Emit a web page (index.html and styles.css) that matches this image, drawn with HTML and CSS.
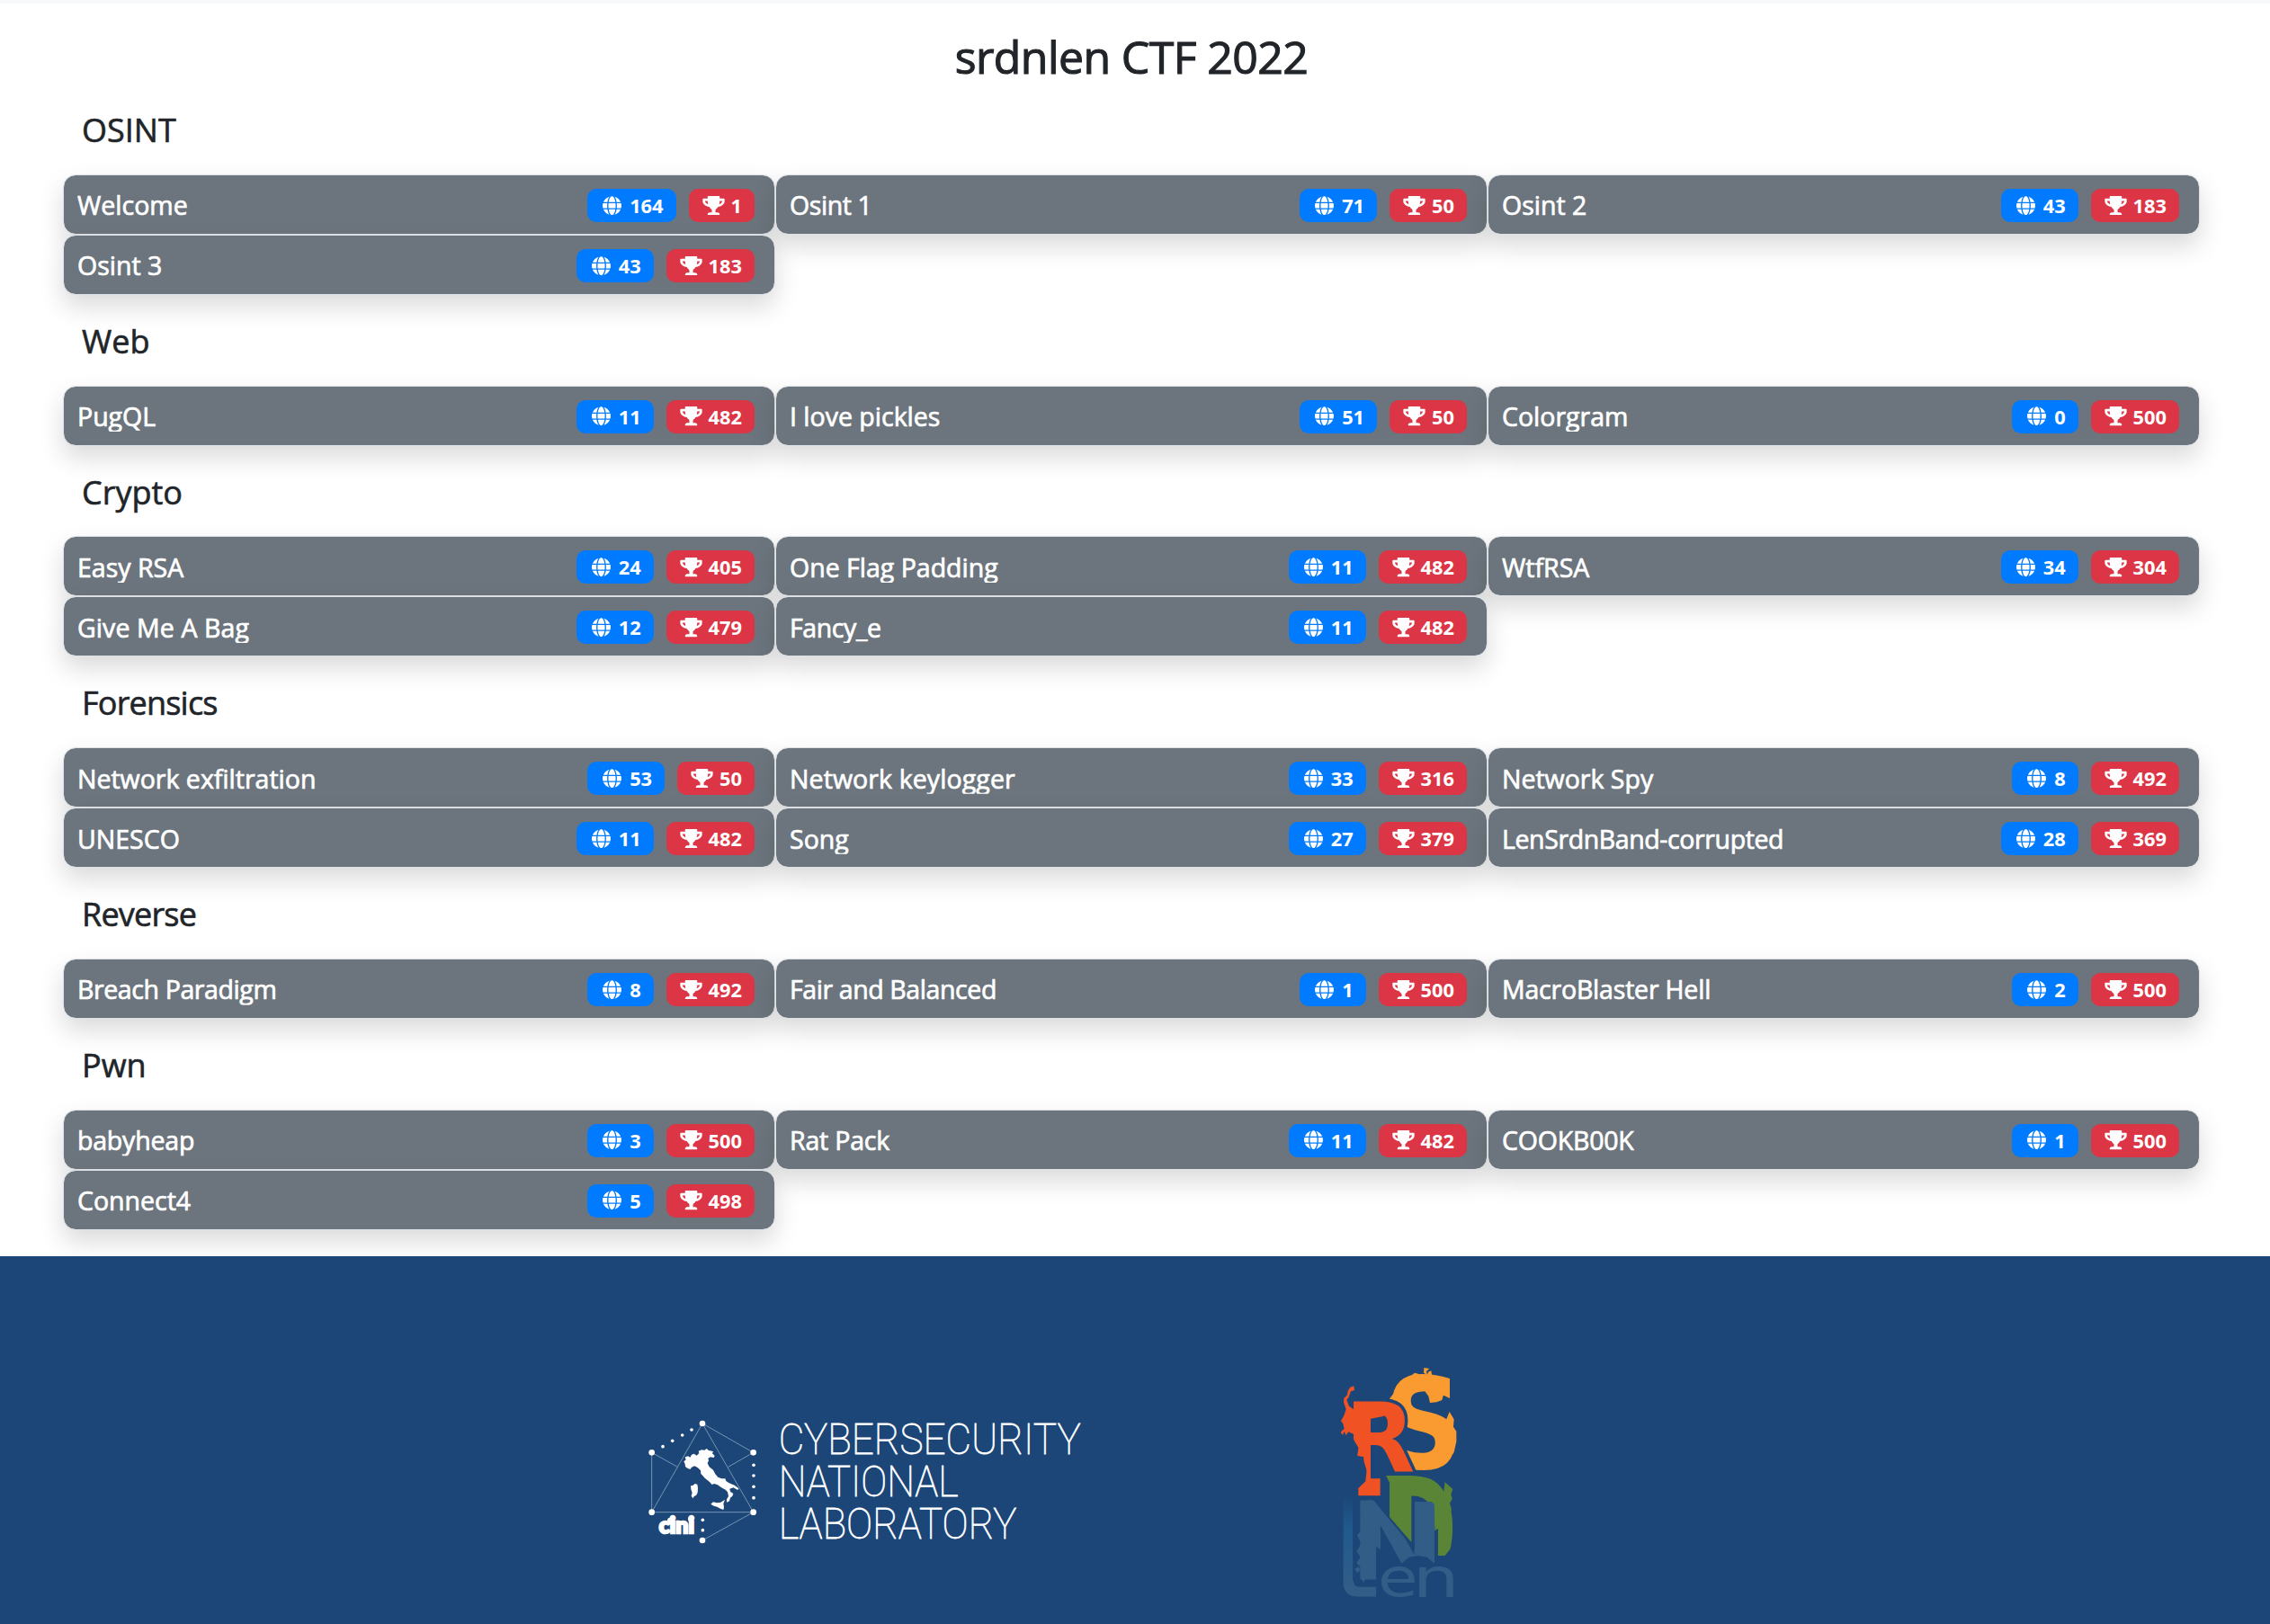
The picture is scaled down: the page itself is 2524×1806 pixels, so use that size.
FILE: index.html
```html
<!DOCTYPE html>
<html lang="en">
<head>
<meta charset="utf-8">
<title>srdnlen CTF 2022</title>
<link rel="stylesheet" href="styles.css">
</head>
<body>
<svg class="sprite" aria-hidden="true">
  <symbol id="globe" viewBox="-72 0 640 512"><path d="M336.5 160C322 70.7 287.8 8 248 8s-74 62.7-88.5 152h177zM152 256c0 22.2 1.2 43.5 3.3 64h185.3c2.1-20.5 3.3-41.8 3.3-64s-1.2-43.5-3.3-64H155.3c-2.1 20.5-3.3 41.8-3.3 64zm324.7-96c-28.6-67.9-86.5-120.4-158-141.6 24.4 33.8 41.2 84.7 50 141.6h108zM177.2 18.4C105.8 39.6 47.8 92.1 19.3 160h108c8.7-56.9 25.5-107.8 49.9-141.6zM487.4 192H372.7c2.1 21 3.3 42.5 3.3 64s-1.2 43-3.3 64h114.6c5.5-20.5 8.6-41.8 8.6-64s-3.1-43.5-8.5-64zM120 256c0-21.5 1.2-43 3.3-64H8.6C3.2 212.5 0 233.8 0 256s3.2 43.5 8.6 64h114.6c-2-21-3.2-42.5-3.2-64zm39.5 96c14.5 89.3 48.7 152 88.5 152s74-62.7 88.5-152h-177zm159.3 141.6c71.4-21.2 129.4-73.7 158-141.6h-108c-8.8 56.9-25.6 107.8-50 141.6zM19.3 352c28.6 67.9 86.5 120.4 158 141.6-24.4-33.8-41.2-84.7-50-141.6h-108z"/></symbol>
  <symbol id="trophy" viewBox="-32 0 640 512"><path d="M552 64H448V24c0-13.3-10.7-24-24-24H152c-13.3 0-24 10.7-24 24v40H24C10.7 64 0 74.7 0 88v56c0 35.7 22.5 72.5 61.9 100.7 31.5 22.7 69.8 37.1 110 41.7C203.3 338.5 240 360 240 360v72h-48c-35.3 0-64 20.7-64 56v12c0 6.6 5.4 12 12 12h296c6.6 0 12-5.4 12-12v-12c0-35.3-28.7-56-64-56h-48v-72s36.7-21.5 68.1-73.6c40.3-4.6 78.6-19 110-41.7 39.3-28.3 61.9-65 61.9-100.7V88c0-13.3-10.7-24-24-24zM99.3 192.8C74.9 175.2 64 155.6 64 144v-16h64.2c1 32.6 5.8 61.2 12.8 86.2-15.1-5.2-29.2-12.4-41.7-21.4zM512 144c0 16.1-17.7 36.1-35.3 48.8-12.5 9-26.7 16.2-41.8 21.4 7-25 11.8-53.6 12.8-86.2H512v16z"/></symbol>
</svg>
<main class="board">
  <h1 class="title">srdnlen CTF 2022</h1>

  <section class="category">
    <h2 class="category-name">OSINT</h2>
    <div class="grid">
      <article class="card"><span class="name">Welcome</span><span class="badge solves"><svg class="icon"><use href="#globe"/></svg>164</span><span class="badge points"><svg class="icon"><use href="#trophy"/></svg>1</span></article>
      <article class="card"><span class="name tight">Osint 1</span><span class="badge solves"><svg class="icon"><use href="#globe"/></svg>71</span><span class="badge points"><svg class="icon"><use href="#trophy"/></svg>50</span></article>
      <article class="card"><span class="name">Osint 2</span><span class="badge solves"><svg class="icon"><use href="#globe"/></svg>43</span><span class="badge points"><svg class="icon"><use href="#trophy"/></svg>183</span></article>
      <article class="card"><span class="name">Osint 3</span><span class="badge solves"><svg class="icon"><use href="#globe"/></svg>43</span><span class="badge points"><svg class="icon"><use href="#trophy"/></svg>183</span></article>
    </div>
  </section>

  <section class="category">
    <h2 class="category-name">Web</h2>
    <div class="grid">
      <article class="card"><span class="name">PugQL</span><span class="badge solves"><svg class="icon"><use href="#globe"/></svg>11</span><span class="badge points"><svg class="icon"><use href="#trophy"/></svg>482</span></article>
      <article class="card"><span class="name">I love pickles</span><span class="badge solves"><svg class="icon"><use href="#globe"/></svg>51</span><span class="badge points"><svg class="icon"><use href="#trophy"/></svg>50</span></article>
      <article class="card"><span class="name">Colorgram</span><span class="badge solves"><svg class="icon"><use href="#globe"/></svg>0</span><span class="badge points"><svg class="icon"><use href="#trophy"/></svg>500</span></article>
    </div>
  </section>

  <section class="category">
    <h2 class="category-name">Crypto</h2>
    <div class="grid">
      <article class="card"><span class="name">Easy RSA</span><span class="badge solves"><svg class="icon"><use href="#globe"/></svg>24</span><span class="badge points"><svg class="icon"><use href="#trophy"/></svg>405</span></article>
      <article class="card"><span class="name">One Flag Padding</span><span class="badge solves"><svg class="icon"><use href="#globe"/></svg>11</span><span class="badge points"><svg class="icon"><use href="#trophy"/></svg>482</span></article>
      <article class="card"><span class="name">WtfRSA</span><span class="badge solves"><svg class="icon"><use href="#globe"/></svg>34</span><span class="badge points"><svg class="icon"><use href="#trophy"/></svg>304</span></article>
      <article class="card"><span class="name wide">Give Me A Bag</span><span class="badge solves"><svg class="icon"><use href="#globe"/></svg>12</span><span class="badge points"><svg class="icon"><use href="#trophy"/></svg>479</span></article>
      <article class="card"><span class="name tight">Fancy_e</span><span class="badge solves"><svg class="icon"><use href="#globe"/></svg>11</span><span class="badge points"><svg class="icon"><use href="#trophy"/></svg>482</span></article>
    </div>
  </section>

  <section class="category">
    <h2 class="category-name tight">Forensics</h2>
    <div class="grid">
      <article class="card"><span class="name">Network exfiltration</span><span class="badge solves"><svg class="icon"><use href="#globe"/></svg>53</span><span class="badge points"><svg class="icon"><use href="#trophy"/></svg>50</span></article>
      <article class="card"><span class="name wide">Network keylogger</span><span class="badge solves"><svg class="icon"><use href="#globe"/></svg>33</span><span class="badge points"><svg class="icon"><use href="#trophy"/></svg>316</span></article>
      <article class="card"><span class="name">Network Spy</span><span class="badge solves"><svg class="icon"><use href="#globe"/></svg>8</span><span class="badge points"><svg class="icon"><use href="#trophy"/></svg>492</span></article>
      <article class="card"><span class="name">UNESCO</span><span class="badge solves"><svg class="icon"><use href="#globe"/></svg>11</span><span class="badge points"><svg class="icon"><use href="#trophy"/></svg>482</span></article>
      <article class="card"><span class="name">Song</span><span class="badge solves"><svg class="icon"><use href="#globe"/></svg>27</span><span class="badge points"><svg class="icon"><use href="#trophy"/></svg>379</span></article>
      <article class="card"><span class="name tight">LenSrdnBand-corrupted</span><span class="badge solves"><svg class="icon"><use href="#globe"/></svg>28</span><span class="badge points"><svg class="icon"><use href="#trophy"/></svg>369</span></article>
    </div>
  </section>

  <section class="category">
    <h2 class="category-name tight">Reverse</h2>
    <div class="grid">
      <article class="card"><span class="name tight">Breach Paradigm</span><span class="badge solves"><svg class="icon"><use href="#globe"/></svg>8</span><span class="badge points"><svg class="icon"><use href="#trophy"/></svg>492</span></article>
      <article class="card"><span class="name tight">Fair and Balanced</span><span class="badge solves"><svg class="icon"><use href="#globe"/></svg>1</span><span class="badge points"><svg class="icon"><use href="#trophy"/></svg>500</span></article>
      <article class="card"><span class="name snug">MacroBlaster Hell</span><span class="badge solves"><svg class="icon"><use href="#globe"/></svg>2</span><span class="badge points"><svg class="icon"><use href="#trophy"/></svg>500</span></article>
    </div>
  </section>

  <section class="category">
    <h2 class="category-name">Pwn</h2>
    <div class="grid">
      <article class="card"><span class="name snug">babyheap</span><span class="badge solves"><svg class="icon"><use href="#globe"/></svg>3</span><span class="badge points"><svg class="icon"><use href="#trophy"/></svg>500</span></article>
      <article class="card"><span class="name snug">Rat Pack</span><span class="badge solves"><svg class="icon"><use href="#globe"/></svg>11</span><span class="badge points"><svg class="icon"><use href="#trophy"/></svg>482</span></article>
      <article class="card"><span class="name snug">COOKB00K</span><span class="badge solves"><svg class="icon"><use href="#globe"/></svg>1</span><span class="badge points"><svg class="icon"><use href="#trophy"/></svg>500</span></article>
      <article class="card"><span class="name">Connect4</span><span class="badge solves"><svg class="icon"><use href="#globe"/></svg>5</span><span class="badge points"><svg class="icon"><use href="#trophy"/></svg>498</span></article>
    </div>
  </section>
</main>

<footer class="footer">
  <svg class="logo-cini" viewBox="0 0 1560 540">
    <g class="lines">
      <path d="M74 365 243 69 413 365ZM243 69 413 166 329 214M160 214 74 166V365M413 365 243 459"/>
    </g>
    <g class="white">
      <circle cx="243" cy="69" r="10"/><circle cx="413" cy="166" r="10"/><circle cx="74" cy="166" r="10"/><circle cx="74" cy="365" r="10"/><circle cx="413" cy="365" r="10"/><circle cx="243" cy="459" r="10"/>
      <circle cx="207" cy="90" r="5.5"/><circle cx="176" cy="108" r="5.5"/><circle cx="143" cy="127" r="5.5"/><circle cx="111" cy="146" r="5.5"/>
      <circle cx="414" cy="208" r="5.5"/><circle cx="414" cy="243" r="5.5"/><circle cx="414" cy="280" r="5.5"/><circle cx="414" cy="317" r="5.5"/>
      <circle cx="244" cy="391" r="5.5"/><circle cx="244" cy="425" r="5.5"/>
      <path d="M181 196 188 190 185 181 195 178 202 182 207 173 215 170 224 176 232 168 230 161 240 157 250 158 257 153 264 159 279 162 276 169 284 177 281 183 270 181 262 185 264 193 260 202 266 214 279 224 286 238 295 248 307 253 319 253 322 261 331 267 350 275 364 286 361 291 346 283 334 287 336 296 346 303 343 311 336 317 333 328 324 332 324 322 330 312 327 298 320 290 309 284 301 279 294 274 282 270 275 273 267 264 251 251 244 243 238 237 237 226 228 217 217 211 207 215 202 222 193 218 186 213 185 204Z"/>
      <path d="M204 277 211 276 218 270 226 272 228 284 227 300 222 309 215 312 212 319 206 311 209 300 205 289Z"/>
      <path d="M271 338 279 331 291 334 304 332 318 323 313 337 315 348 313 357 303 353 292 347 281 344Z"/>
    </g>
    <text class="cini" x="98" y="436" textLength="118" lengthAdjust="spacingAndGlyphs">cini</text>
    <circle class="white" cx="136" cy="393" r="10"/><circle class="white" cx="205" cy="388" r="10"/>
    <g class="lab">
      <text x="497" y="172" textLength="1008" lengthAdjust="spacingAndGlyphs">CYBERSECURITY</text>
      <text x="497" y="311" textLength="600" lengthAdjust="spacingAndGlyphs">NATIONAL</text>
      <text x="497" y="452" textLength="794" lengthAdjust="spacingAndGlyphs">LABORATORY</text>
    </g>
  </svg>
  <svg class="logo-srdnlen" viewBox="0 0 570 900">
    <defs>
      <linearGradient id="fade" x1="0" y1="0" x2="0" y2="1"><stop offset=".18" stop-color="#1b4677"/><stop offset=".4" stop-color="#205a8e"/><stop offset=".75" stop-color="#315d87"/></linearGradient>
      <clipPath id="clip-r"><path d="M128 170H360V413H280V440H179V405L170 375 169 360 148 356 152 330 137 305 132 280Z"/></clipPath>
      <clipPath id="clip-d"><path d="M240 400H480V640L440 690H417V600L328 645 250 555Z"/></clipPath>
      <clipPath id="clip-n"><path d="M150 490H190L339 672V510H395L405 520V716L380 695 350 690 320 695 295 716 210 660V770H150Z"/></clipPath>
      <clipPath id="clip-l"><path d="M100 490H134V770Q134 794 156 794H211V827H150Q100 827 100 775Z"/></clipPath>
    </defs>
    <g fill="#f99b30">
      <text class="block" transform="translate(238 399) scale(3.64 4.23)">S</text>
      <path d="M254 168 268 149 284 143 303 122 318 119 329 108 327 89 339 80 353 84 360 100 375 97 390 103 397 122 415 114 425 121 415 128 424 148 435 154 430 171 412 178 390 180 385 158 370 137 352 131 330 137 319 155 310 170Z"/>
      <path d="M370 63 388 66 378 75 381 88 369 80ZM384 77 394 73 396 86 408 97 400 103 389 98 381 88ZM427 131 438 128 430 138ZM432 149 449 154 440 157Z"/>
      <path d="M455 210 470 235 468 260 478 275 478 310 470 345 445 380 425 390 440 330 430 270Z"/>
    </g>
    <text class="block halo" transform="translate(107 411) scale(3.02 3.21)">R</text>
    <g fill="#f15223">
      <g clip-path="url(#clip-r)"><text class="block" transform="translate(107 411) scale(3.02 3.21)">R</text></g>
      <path d="M124 128 136 124 138 138 126 142 118 163 112 170 120 191 135 202 165 211 188 210 215 190 245 179 235 225 192 233V433H224V490H151V465L175 442 179 405 170 375 169 360 148 356 152 330 137 305 136 285 118 277 110 289 104 275 99 288 92 278 104 266 100 250 93 240 103 223 110 202 102 178 103 165 114 154 116 140Z"/>
    </g>
    <g fill="#5a8537">
      <g clip-path="url(#clip-d)"><text class="block" transform="translate(227 770) scale(3.06 4.76)">D</text></g>
      <path d="M243 423H328V645L257 560V450ZM440 445 466 468 460 485 464 500 456 515 462 535 452 560 457 585 448 610 453 630 441 650 445 665 434 682 417 690V610L425 560Z"/>
    </g>
    <g fill="#315d87">
      <g clip-path="url(#clip-n)"><text class="block" transform="translate(122 770) scale(3.8 3.62)">N</text></g>
      <path d="M164 532 185 540 188 500 200 512V768L185 750 165 735 145 715 158 695 145 675 160 650 147 620 165 602 174 575 163 553ZM138 735 152 727 157 738 148 748ZM158 744 170 742 176 765 168 781 160 764Z"/>
      <g clip-path="url(#clip-l)"><text class="stem" fill="url(#fade)" transform="translate(84 827) scale(2.3 4.9)">L</text></g>
      <text class="thin" transform="translate(216 826) scale(2.18 1.77)">e</text>
      <text class="thin" transform="translate(332 827) scale(2.46 1.82)">n</text>
    </g>
  </svg>
</footer>
</body>
</html>
```

FILE: styles.css
```css
* { box-sizing: border-box; }

body {
  margin: 0;
  background: #fff;
  color: #212529;
  font-family: "Open Sans", "Noto Sans", sans-serif;
  font-weight: 500;
}

.sprite { display: none; }

.board {
  height: 1397px;
  padding: 0 78px 0 70px;
  border-top: 4px solid #f8f9fb;
  overflow: hidden;
}

.title {
  margin: 0;
  padding-top: 24px;
  height: 89px;
  text-align: center;
  font-size: 50px;
  line-height: 70px;
  font-weight: 500;
  letter-spacing: -0.6px;
  -webkit-text-stroke: 1.1px #212529;
}

.category-name {
  margin: 0;
  height: 100.8px;
  padding: 27px 0 0 21px;
  font-size: 36px;
  line-height: 50px;
  font-weight: 500;
  -webkit-text-stroke: 0.6px #212529;
}

.category-name.tight { letter-spacing: -0.8px; }

.grid {
  display: grid;
  grid-template-columns: repeat(3, 792px);
  grid-auto-rows: 67px;
}

.card {
  display: flex;
  align-items: center;
  padding: 2px 22px 0 15px;
  border: 1px solid #dee2e6;
  border-radius: 14px;
  background: #6c757d;
  background-clip: padding-box;
  box-shadow: 0 13px 28px rgba(0, 0, 0, .15);
  color: #fff;
}

.name {
  flex: 1;
  font-size: 28.5px;
  line-height: 40px;
  -webkit-text-stroke: 0.7px #fff;
  clip-path: inset(0 0 3px);
}

.name.tight { letter-spacing: -0.4px; }
.name.snug { letter-spacing: -0.2px; }
.name.wide { letter-spacing: 0.1px; }

.badge {
  display: flex;
  align-items: center;
  gap: 6px;
  height: 37px;
  margin-left: 14px;
  padding: 0 14px;
  border-radius: 10px;
  font-size: 21.8px;
  font-weight: 700;
}

.solves { background: #007bff; }
.points { background: #dc3545; }

.icon {
  width: 27px;
  height: 21.6px;
  fill: #fff;
}

.footer {
  display: flex;
  gap: 240px;
  height: 409px;
  padding: 103px 0 0 700px;
  background: #1b4677;
}

.logo-cini {
  width: 520px;
  height: 180px;
  margin-top: 60px;
  overflow: visible;
}

.logo-srdnlen {
  width: 190px;
  height: 300px;
  overflow: visible;
}

.lines { fill: none; stroke: #8aa3bf; stroke-width: 2.5; }
.white { fill: #fff; }
.cini { fill: #fff; stroke: #fff; stroke-width: 7; font: 900 72px Lato, sans-serif; }
.lab { fill: #fff; stroke: #fff; stroke-width: 2.5; font: 100 147px Roboto, sans-serif; }
.block { font: 700 100px "DejaVu Sans", sans-serif; }
.stem { font: 700 100px "Liberation Sans", sans-serif; }
.thin { font: 400 100px "DejaVu Sans", sans-serif; }
.halo { fill: #1b4677; stroke: #1b4677; stroke-width: 7; }
```
